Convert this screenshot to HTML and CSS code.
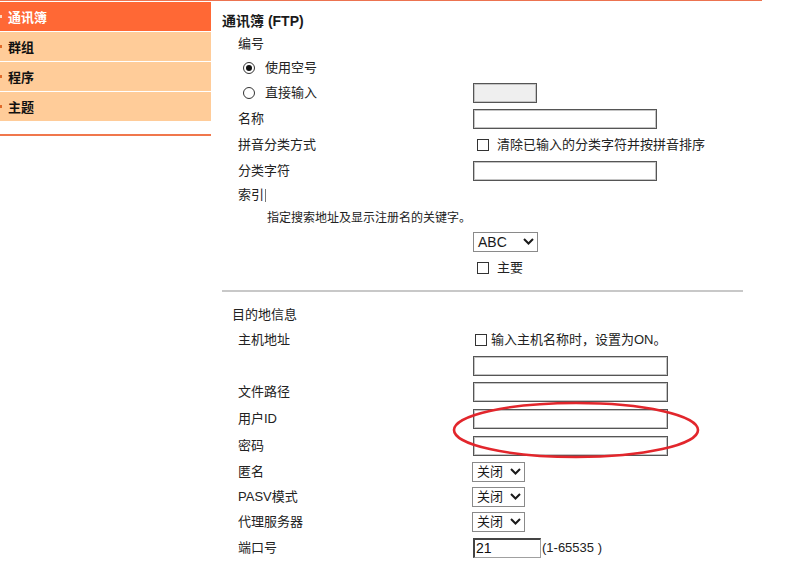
FILE: index.html
```html
<!DOCTYPE html>
<html lang="zh-CN">
<head>
<meta charset="utf-8">
<title>通讯簿 (FTP)</title>
<link rel="stylesheet" href="styles.css">
</head>
<body>
<div class="page">
  <nav class="side">
    <div class="item active"><span class="dot"></span>通讯簿</div>
    <div class="item"><span class="dot"></span>群组</div>
    <div class="item"><span class="dot"></span>程序</div>
    <div class="item"><span class="dot"></span>主题</div>
    <div class="side-line"></div>
  </nav>
  <main class="content">
    <div class="title h24">通讯簿 (FTP)</div>
    <div class="row h24"><div class="lbl">编号</div></div>
    <div class="row h24"><div class="lbl"><span class="radio on"></span>使用空号</div></div>
    <div class="row h26"><div class="lbl"><span class="radio"></span>直接输入</div><div class="inp small disabled"></div></div>
    <div class="row h26"><div class="lbl">名称</div><div class="inp w184"></div></div>
    <div class="row h26"><div class="lbl">拼音分类方式</div><div class="ctl"><span class="cbox m4"></span><span class="ctext g8">清除已输入的分类字符并按拼音排序</span></div></div>
    <div class="row h25"><div class="lbl">分类字符</div><div class="inp w184"></div></div>
    <div class="row h24"><div class="lbl">索引<span class="caret"></span></div></div>
    <div class="row h21"><div class="hint">指定搜索地址及显示注册名的关键字。</div></div>
    <div class="row h27"><div class="lbl"></div><div class="sel abc"><span>ABC</span><svg width="11" height="7" viewBox="0 0 11 7"><path d="M1 1 L5.5 5.5 L10 1" fill="none" stroke="#1a1a1a" stroke-width="2"/></svg></div></div>
    <div class="row h26"><div class="lbl"></div><div class="ctl"><span class="cbox m4"></span><span class="ctext g8">主要</span></div></div>
    <div class="sep"></div>
    <div class="row sub h25"><div class="lbl">目的地信息</div></div>
    <div class="row h26"><div class="lbl">主机地址</div><div class="ctl"><span class="cbox m2"></span><span class="ctext g4">输入主机名称时，设置为ON。</span></div></div>
    <div class="row h25"><div class="lbl"></div><div class="inp w195"></div></div>
    <div class="row h27"><div class="lbl">文件路径</div><div class="inp w195"></div></div>
    <div class="row h27"><div class="lbl">用户ID</div><div class="inp w195"></div></div>
    <div class="row h27"><div class="lbl">密码</div><div class="inp w195"></div></div>
    <div class="row h25"><div class="lbl">匿名</div><div class="sel off"><span>关闭</span><svg width="11" height="7" viewBox="0 0 11 7"><path d="M1 1 L5.5 5.5 L10 1" fill="none" stroke="#1a1a1a" stroke-width="2"/></svg></div></div>
    <div class="row h25"><div class="lbl">PASV模式</div><div class="sel off"><span>关闭</span><svg width="11" height="7" viewBox="0 0 11 7"><path d="M1 1 L5.5 5.5 L10 1" fill="none" stroke="#1a1a1a" stroke-width="2"/></svg></div></div>
    <div class="row h25"><div class="lbl">代理服务器</div><div class="sel off"><span>关闭</span><svg width="11" height="7" viewBox="0 0 11 7"><path d="M1 1 L5.5 5.5 L10 1" fill="none" stroke="#1a1a1a" stroke-width="2"/></svg></div></div>
    <div class="row h27"><div class="lbl">端口号</div><div class="inp port">21</div><span class="range">(1-65535 )</span></div>
  </main>
  <svg class="mark" width="256" height="62" viewBox="0 0 256 62"><ellipse cx="127" cy="31" rx="122" ry="27" fill="none" stroke="#e2262c" stroke-width="2.6"/></svg>
</div>
</body>
</html>
```

FILE: styles.css
```css
html, body {
  margin: 0;
  padding: 0;
  background: #fff;
}
body {
  font-family: "Liberation Sans", "Noto Sans CJK SC", sans-serif;
  font-size: 13px;
  color: #222;
}
.page {
  position: relative;
  display: flex;
  align-items: flex-start;
  width: 762px;
  border-top: 1px solid #ec7350;
}
.side {
  width: 211px;
  flex: none;
  padding-top: 1px;
}
.item {
  position: relative;
  height: 29px;
  margin-bottom: 1px;
  background: #ffcc99;
  display: flex;
  align-items: center;
  padding-left: 8px;
  font-weight: bold;
  font-size: 13px;
  color: #111;
}
.item.active {
  background: #ff6835;
  color: #fff;
}
.dot {
  position: absolute;
  left: 0;
  top: 13px;
  width: 2px;
  height: 3px;
  background: #e06a2a;
}
.item.active .dot {
  background: #ffd9c0;
}
.side-line {
  margin-top: 13px;
  height: 2px;
  background: #f0774c;
}
.content {
  margin-left: 11px;
  width: 521px;
  padding-top: 7px;
}
.title {
  display: flex;
  align-items: center;
  font-weight: bold;
  font-size: 14px;
  color: #1a1a1a;
}
.row {
  display: flex;
  align-items: center;
  padding-left: 16px;
}
.row.sub {
  padding-left: 10px;
}
.row.sub .lbl {
  width: 241px;
}
.h21 { height: 21px; }
.h24 { height: 24px; }
.h25 { height: 25px; }
.h26 { height: 26px; }
.h27 { height: 27px; }
.lbl {
  width: 235px;
  flex: none;
  display: flex;
  align-items: center;
  line-height: 16px;
}
.hint {
  padding-left: 29px;
  font-size: 12px;
  line-height: 16px;
}
.caret {
  display: inline-block;
  width: 0;
  height: 13px;
  border-left: 1px solid #777;
  margin-left: 1px;
}
.radio {
  box-sizing: border-box;
  width: 12px;
  height: 12px;
  border: 1px solid #333;
  border-radius: 50%;
  margin-left: 5px;
  margin-right: 10px;
  display: inline-flex;
  align-items: center;
  justify-content: center;
  background: #fff;
}
.radio.on::after {
  content: "";
  width: 6px;
  height: 6px;
  border-radius: 50%;
  background: #111;
}
.inp {
  box-sizing: border-box;
  height: 20px;
  border: 1px solid #555;
  box-shadow: inset 0 0 0 1px #c4c4c4;
  background: #fff;
}
.inp.small { width: 64px; }
.inp.disabled { background: #efefef; }
.inp.w184 { width: 184px; }
.inp.w195 { width: 195px; }
.inp.port {
  width: 68px;
  border-top: 2px solid #444;
  border-left: 2px solid #444;
  border-right: 1px solid #a0a0a0;
  border-bottom: 1px solid #a0a0a0;
  box-shadow: none;
  font-size: 14px;
  line-height: 16px;
  padding-left: 1px;
  color: #111;
}
.range {
  margin-left: 1px;
  font-size: 13px;
  color: #222;
}
.ctl {
  display: flex;
  align-items: center;
}
.cbox {
  box-sizing: border-box;
  width: 12px;
  height: 12px;
  border: 1px solid #333;
  background: #fff;
}
.m4 { margin-left: 4px; }
.m2 { margin-left: 2px; }
.g8 { margin-left: 8px; }
.g4 { margin-left: 4px; }
.ctext {
  line-height: 16px;
}
.sel {
  box-sizing: border-box;
  height: 20px;
  border: 1px solid #8a8a8a;
  background: #fff;
  display: flex;
  align-items: center;
  justify-content: space-between;
  color: #1a1a1a;
  line-height: 16px;
}
.sel.abc {
  width: 65px;
  padding: 0 3px 0 4px;
  font-size: 14px;
}
.sel.off {
  width: 53px;
  margin-left: -1px;
  padding: 0 3px 0 4px;
}
.sep {
  margin-top: 9px;
  margin-bottom: 10px;
  height: 2px;
  background: #c8c8c8;
}
.mark {
  position: absolute;
  left: 449px;
  top: 398px;
}
```
